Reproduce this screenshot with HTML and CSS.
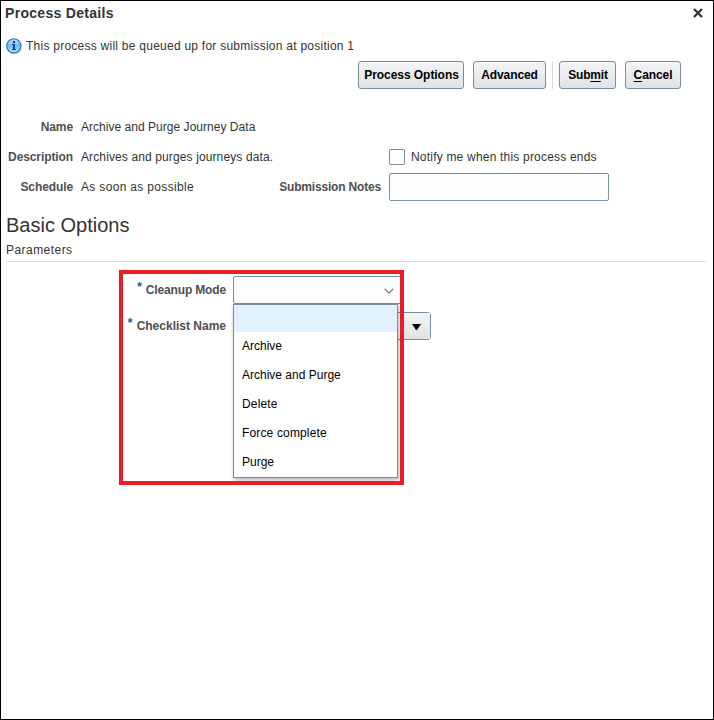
FILE: index.html
```html
<!DOCTYPE html>
<html lang="en">
<head>
<meta charset="utf-8">
<title>Process Details</title>
<link rel="stylesheet" href="styles.css">
</head>
<body>
<main class="dialog">
  <header class="titlebar">
    <h1 class="title">Process Details</h1>
    <svg class="close" width="10" height="10" viewBox="0 0 10 10"><path d="M1 1L9 9M9 1L1 9" stroke="#333" stroke-width="2.3"/></svg>
  </header>
  <div class="message">
    <svg width="17" height="17" viewBox="0 0 17 17">
      <defs><linearGradient id="info" x1="0" y1="0" x2="0" y2="1"><stop offset="0" stop-color="#b5defa"/><stop offset=".5" stop-color="#6fbdf6"/><stop offset="1" stop-color="#a4ecff"/></linearGradient></defs>
      <circle cx="8.3" cy="8.7" r="7.6" fill="#999" opacity=".5"/>
      <circle cx="7.8" cy="7.8" r="7.1" fill="url(#info)" stroke="#2a6cc4" stroke-width="1.1"/>
      <path d="M7 3h2v2H7zM6 6h3v5h1v1H6v-1h1V7H6z" fill="#103f8c"/>
    </svg>
    <span class="t-message">This process will be queued up for submission at position 1</span>
  </div>
  <div class="toolbar">
    <button class="btn b-options"><span>Process Options</span></button>
    <button class="btn b-advanced"><span>Advanced</span></button>
    <i class="separator"></i>
    <button class="btn b-submit"><span>Sub<u>m</u>it</span></button>
    <button class="btn b-cancel"><span><u>C</u>ancel</span></button>
  </div>
  <section class="details">
    <div class="row"><b class="label">Name</b><span class="value v-name">Archive and Purge Journey Data</span></div>
    <div class="row"><b class="label">Description</b><span class="value">Archives and purges journeys data.</span><span class="field-label"></span><i class="checkbox"></i><span class="t-notify">Notify me when this process ends</span></div>
    <div class="row"><b class="label">Schedule</b><span class="value v-schedule">As soon as possible</span><b class="field-label">Submission Notes</b><span class="notes"></span></div>
  </section>
  <h2 class="heading">Basic Options</h2>
  <h3 class="subheading">Parameters</h3>
  <section class="params">
    <div class="param">
      <b class="param-label l-cleanup"><i class="star">*</i>Cleanup Mode</b>
      <div class="select">
        <svg width="10" height="6" viewBox="0 0 10 6"><path d="M.7.7L5 5L9.3.7" fill="none" stroke="#858585" stroke-width="1.3"/></svg>
        <ul class="menu">
          <li class="active"></li>
          <li class="tight">Archive</li>
          <li class="tight">Archive and Purge</li>
          <li>Delete</li>
          <li>Force complete</li>
          <li class="tight">Purge</li>
        </ul>
      </div>
    </div>
    <div class="param">
      <b class="param-label"><i class="star">*</i>Checklist Name</b>
      <div class="combo"><span class="drop"><svg width="9" height="6" viewBox="0 0 9 6"><path d="M0 0H9L5 6H4Z"/></svg></span></div>
    </div>
    <div class="highlight"></div>
  </section>
</main>
</body>
</html>
```
FILE: styles.css
```css
* { box-sizing: border-box; }
body { margin: 0; background: #fff; }
.dialog {
  width: 714px; height: 720px; border: 1px solid #000; overflow: hidden;
  font: 12px/16px "Liberation Sans", Arial, sans-serif; color: #333;
}
h1, h2, h3, ul { margin: 0; padding: 0; font-weight: normal; }
i { font-style: normal; }
.titlebar { display: flex; align-items: center; justify-content: space-between; height: 24px; padding: 0 10px 0 4px; }
.title { font-size: 14px; font-weight: bold; letter-spacing: .3px; }
.message { display: flex; align-items: center; gap: 3px; height: 20px; margin-top: 11px; padding-left: 5px; }
.t-message { letter-spacing: .25px; }
.toolbar { display: flex; height: 28px; margin-top: 5px; padding-left: 357px; }
.btn {
  height: 28px; padding: 0; border: 1px solid #748fa3; border-radius: 3px; white-space: nowrap;
  background: linear-gradient(#f3f4f6, #e0e3e6); color: #000;
  font: bold 12px/16px "Liberation Sans", Arial, sans-serif;
}
.btn u { text-underline-offset: 2px; }
.b-options { width: 106px; padding-left: 1px; letter-spacing: -.05px; }
.b-advanced { width: 73px; margin-left: 9px; letter-spacing: -.1px; }
.separator { width: 1px; margin: 0 6px; background: #d0dde5; }
.b-submit { width: 57px; padding-left: 1px; letter-spacing: -.2px; }
.b-cancel { width: 56px; margin-left: 9px; letter-spacing: -.1px; }
.details { margin-top: 23px; }
.row { display: flex; align-items: center; height: 30px; }
.label { width: 72px; text-align: right; color: #4f4f4f; letter-spacing: -.1px; }
.value { width: 192px; margin-left: 8px; letter-spacing: .12px; white-space: nowrap; }
.v-name { letter-spacing: .03px; }
.v-schedule { letter-spacing: .33px; }
.field-label { width: 108px; margin-right: 8px; text-align: right; color: #4f4f4f; letter-spacing: -.18px; }
.checkbox { width: 16px; height: 16px; border: 1px solid #7a91a2; border-radius: 1px; }
.t-notify { margin-left: 6px; letter-spacing: .2px; }
.notes { width: 220px; height: 28px; border: 1px solid #7a91a2; border-radius: 2px; background: #fcfdfe; }
.heading { height: 26px; margin: 10px 0 0 5px; font-size: 20px; line-height: 26px; }
.subheading { height: 23px; margin: 1px 7px 0 5px; border-bottom: 1px solid #d5dee3; font-size: 12px; line-height: 23px; letter-spacing: .45px; }
.params { position: relative; padding-top: 14px; }
.param { display: flex; height: 28px; margin-bottom: 8px; }
.param-label { width: 225px; margin-right: 7px; line-height: 27px; text-align: right; color: #4f4f4f; }
.l-cleanup { letter-spacing: -.15px; }
.star { position: relative; top: -3px; margin-right: 4px; color: #0d62ae; font-weight: bold; font-size: 13px; }
.select {
  position: relative; display: flex; align-items: center; justify-content: flex-end;
  width: 170px; height: 28px; padding: 2px 8px 0 0; border: 1px solid #748fa3; border-radius: 2px; background: #fcfdfe;
}
.menu {
  position: absolute; z-index: 1; top: 27px; left: -1px; width: 165px; height: 174px; list-style: none;
  border: 1px solid #748fa3; background: #fff; box-shadow: 1px 2px 4px rgba(0,0,0,.3);
  color: #000; letter-spacing: .15px;
}
.menu li { height: 29px; padding-left: 8px; line-height: 28px; }
.menu .tight { letter-spacing: 0; }
.menu .active { height: 27px; background: #e3f1ff; }
.combo { display: flex; justify-content: flex-end; width: 198px; border: 1px solid #748fa3; border-radius: 3px; background: #fcfdfe; }
.drop { display: flex; align-items: center; justify-content: center; width: 28px; padding-top: 1px; background: linear-gradient(#f3f4f6, #e0e3e6); }
.highlight { position: absolute; z-index: 2; left: 118px; top: 8px; width: 285px; height: 215px; border: 4px solid #ed1c24; }
```
